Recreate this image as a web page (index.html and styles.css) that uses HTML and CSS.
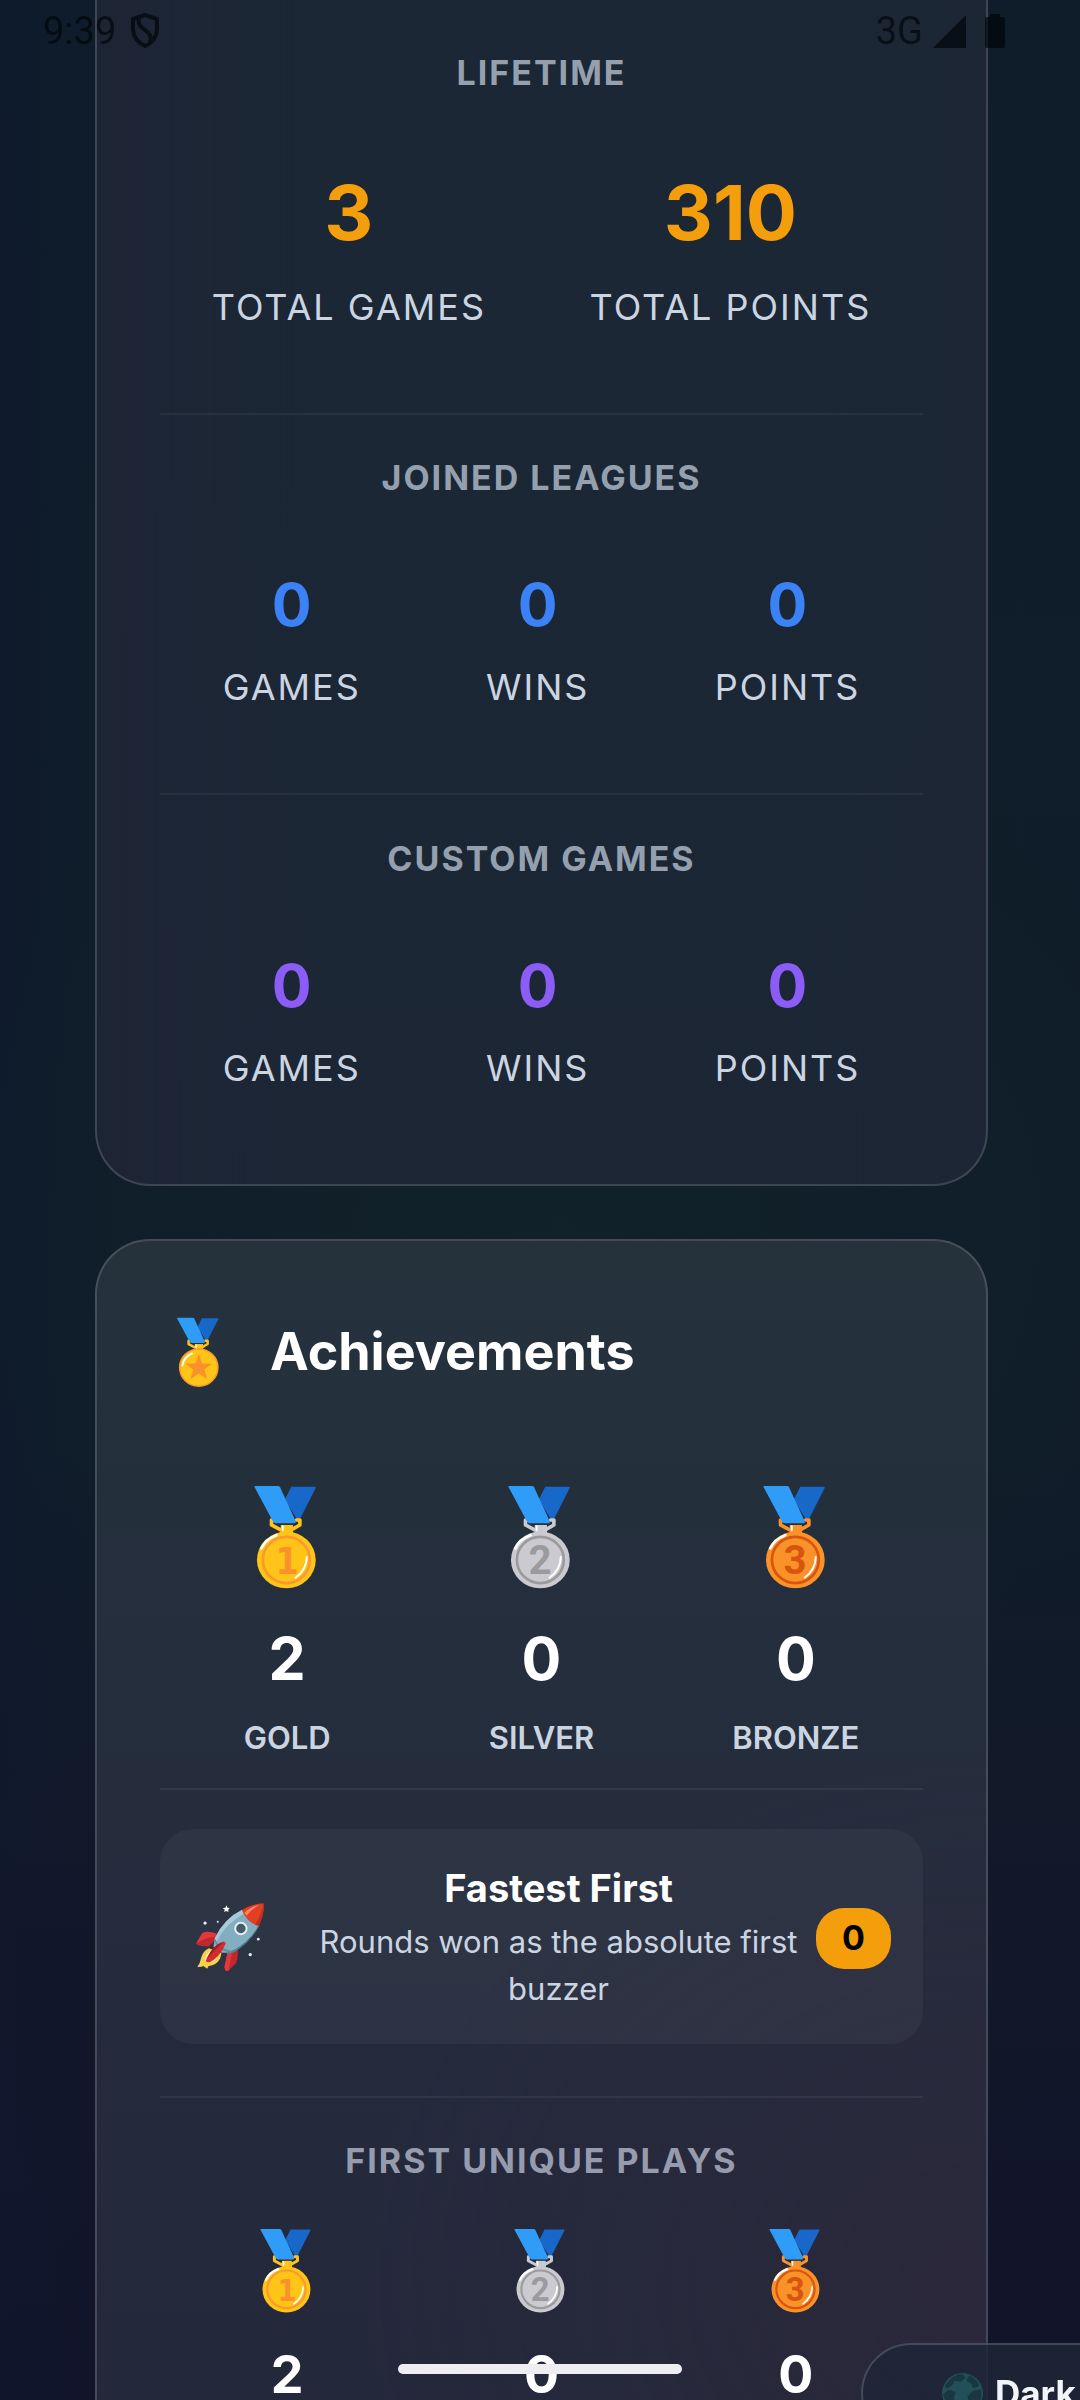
FILE: index.html
```html
<!DOCTYPE html>
<html lang="en">
<head>
<meta charset="utf-8">
<meta name="viewport" content="width=device-width, initial-scale=1">
<title>Player profile</title>
<link rel="stylesheet" href="styles.css">
</head>
<body>
<svg class="defs" aria-hidden="true">
  <defs>
    <g id="ribbon">
      <path d="M112 2H184Q187 3 186 6L134 108L92 42Z" fill="#1768c8"/>
      <path d="M57 103H52V118L80 133H112L138 118V103H128" fill="none" stroke="currentColor" stroke-width="11" stroke-linejoin="round" stroke-linecap="round"/>
      <path d="M80 118H117V145H80Z" fill="currentColor"/>
      <path d="M86 122V134" stroke="#fff" stroke-width="6" stroke-linecap="round"/>
      <path d="M2 0H72Q76 0 78 4L125 106Q128 113 121 113H66Q60 113 57 108L1 4Q-1 0 2 0Z" fill="#2f9df7"/>
    </g>
    <g id="shine" fill="none" stroke="#fff" stroke-linecap="round">
      <path d="M21 189Q34 161 67 149" stroke-width="8"/>
      <path d="M159 215Q158 254 125 278" stroke-width="6"/>
    </g>
    <symbol id="medal-gold" viewBox="0 0 198 312">
      <g color="#fec417"><use href="#ribbon"/></g>
      <ellipse cx="97" cy="224" rx="89" ry="86" fill="#fec417"/>
      <ellipse cx="97" cy="224" rx="71" ry="70" fill="none" stroke="#fb9a2c" stroke-width="8"/>
      <text class="medal-digit slab" x="99" y="267" fill="#fb912c">1</text>
      <use href="#shine"/>
    </symbol>
    <symbol id="medal-silver" viewBox="0 0 198 312">
      <g color="#cbcad0"><use href="#ribbon"/></g>
      <ellipse cx="97" cy="224" rx="89" ry="86" fill="#cbcad0"/>
      <ellipse cx="97" cy="224" rx="71" ry="70" fill="none" stroke="#9b9b9e" stroke-width="8"/>
      <text class="medal-digit" x="96" y="268" fill="#9b9b9e">2</text>
      <use href="#shine"/>
    </symbol>
    <symbol id="medal-bronze" viewBox="0 0 198 312">
      <g color="#f99228"><use href="#ribbon"/></g>
      <ellipse cx="97" cy="224" rx="89" ry="86" fill="#f99228"/>
      <ellipse cx="97" cy="224" rx="71" ry="70" fill="none" stroke="#d8540f" stroke-width="8"/>
      <text class="medal-digit" x="96" y="268" fill="#d8540f">3</text>
      <use href="#shine"/>
    </symbol>
  </defs>
</svg>

<header class="status">
  <span class="status-group">9:39
    <svg class="shield" viewBox="0 0 30 36" aria-hidden="true"><path d="M15 2L27 6V17Q26 28 15 33Q4 28 3 17V6ZM9 5Q7 12 15 17Q23 23 20 29" fill="none" stroke="currentColor" stroke-width="4" stroke-linejoin="round"/></svg>
  </span>
  <span class="status-group right">3G
    <svg class="signal" viewBox="0 0 33 33" aria-hidden="true"><path d="M0 33L33 0V33Z" fill="currentColor"/></svg>
    <svg class="battery" viewBox="0 0 20 34" aria-hidden="true"><path d="M5 3V0H15V3H18Q20 3 20 5V32Q20 34 18 34H2Q0 34 0 32V5Q0 3 2 3Z" fill="currentColor"/></svg>
  </span>
</header>

<main class="page">
  <section class="card stats">
    <section class="block lifetime">
      <h3 class="label">Lifetime</h3>
      <div class="row">
        <div class="stat"><strong>3</strong><span>Total games</span></div>
        <div class="stat"><strong>310</strong><span>Total points</span></div>
      </div>
    </section>
    <section class="block leagues">
      <h3 class="label">Joined leagues</h3>
      <div class="row">
        <div class="stat"><strong>0</strong><span>Games</span></div>
        <div class="stat"><strong>0</strong><span>Wins</span></div>
        <div class="stat"><strong>0</strong><span>Points</span></div>
      </div>
    </section>
    <section class="block custom">
      <h3 class="label">Custom games</h3>
      <div class="row">
        <div class="stat"><strong>0</strong><span>Games</span></div>
        <div class="stat"><strong>0</strong><span>Wins</span></div>
        <div class="stat"><strong>0</strong><span>Points</span></div>
      </div>
    </section>
  </section>

  <section class="card achievements">
    <div class="card-head">
      <svg class="badge-icon" viewBox="0 0 189 312" aria-hidden="true">
        <g color="#fec417"><use href="#ribbon"/></g>
        <ellipse cx="98" cy="224" rx="86" ry="84" fill="#fec417" stroke="#fb9a2c" stroke-width="7"/>
        <path d="M98 163L113 206L158 207L123 233L135 276L98 251L61 276L73 233L38 207L83 206Z" fill="#fb912c"/>
        <path d="M24 215Q30 177 68 160" fill="none" stroke="#fff" stroke-width="8" stroke-linecap="round"/>
      </svg>
      <h2>Achievements</h2>
    </div>
    <div class="medals">
      <div class="medal"><svg aria-hidden="true"><use href="#medal-gold"/></svg><strong>2</strong><span>Gold</span></div>
      <div class="medal"><svg aria-hidden="true"><use href="#medal-silver"/></svg><strong>0</strong><span>Silver</span></div>
      <div class="medal"><svg aria-hidden="true"><use href="#medal-bronze"/></svg><strong>0</strong><span>Bronze</span></div>
    </div>
    <div class="feature-wrap">
      <article class="feature">
        <svg class="rocket" viewBox="0 0 206 209" aria-hidden="true">
          <path d="M61 91Q28 80 18 91L0 122Q3 129 38 130L59 110Z" fill="#c1272d"/>
          <path d="M61 91Q28 80 18 91L0 122Q24 104 58 101Z" fill="#e0383c"/>
          <path d="M94 148L85 190Q87 207 97 202L119 180Q128 160 124 134Z" fill="#c1272d"/>
          <path d="M94 148L85 190Q87 207 97 202Q102 178 108 145Z" fill="#e0383c"/>
          <path d="M39 135Q21 142 15 165Q12 182 4 191Q17 192 22 188L33 196L38 188Q61 187 72 166L76 150Z" fill="#f8d04c"/>
          <path d="M43 143Q29 152 26 172L46 176Q60 171 65 158Z" fill="#fff7cd"/>
          <path d="M138 20Q84 46 56 105L52 130L68 146Q96 152 108 144Q161 116 187 68Z" fill="#82aebf"/>
          <path d="M138 20Q84 46 56 105L61 117Q82 67 148 29Z" fill="#a5cbd8"/>
          <path d="M187 68Q159 126 90 150Q108 153 124 140Q166 113 191 65Z" fill="#4f879b"/>
          <path d="M56 110Q67 139 105 146" fill="none" stroke="#5d8c9c" stroke-width="5"/>
          <path d="M137 22Q165 2 201 1Q207 27 187 68Q153 60 137 22Z" fill="#df3f24"/>
          <path d="M145 29Q165 9 190 6Q165 18 151 38Z" fill="#ff8264"/>
          <path d="M201 1Q207 27 187 68L176 65Q198 32 201 1Z" fill="#c42c1c"/>
          <circle cx="134" cy="76" r="17" fill="#485a66" stroke="#e6eced" stroke-width="6"/>
          <path d="M84 115Q59 122 43 146Q27 170 30 174Q39 185 65 159Q81 142 89 120Z" fill="#d32c2f"/>
          <path d="M84 115Q59 122 43 146L33 166Q64 132 84 115Z" fill="#a51b23"/>
          <path d="M91 7L94 14L101 15L96 20L97 27L91 24L84 27L86 20L80 15L88 14Z" fill="#fff"/>
          <g fill="#e8eef4"><circle cx="27" cy="60" r="5"/><circle cx="65" cy="56" r="3"/><circle cx="186" cy="108" r="4"/><circle cx="162" cy="154" r="5"/></g>
        </svg>
        <div class="feature-text">
          <h4>Fastest First</h4>
          <p>Rounds won as the absolute first buzzer</p>
        </div>
        <span class="pill">0</span>
      </article>
    </div>
    <section class="block plays">
      <h3 class="label">First unique plays</h3>
      <div class="medals small">
        <div class="medal"><svg aria-hidden="true"><use href="#medal-gold"/></svg><strong>2</strong></div>
        <div class="medal"><svg aria-hidden="true"><use href="#medal-silver"/></svg><strong>0</strong></div>
        <div class="medal"><svg aria-hidden="true"><use href="#medal-bronze"/></svg><strong>0</strong></div>
      </div>
    </section>
  </section>
</main>

<div class="home-bar"></div>
<button class="theme" type="button">
  <svg class="globe" viewBox="0 0 42 42" aria-hidden="true"><circle cx="21" cy="21" r="21" fill="#215058"/><path d="M9 6Q14 1 21 1L24 5L19 9L13 8L10 13L5 16L3 13ZM28 2Q36 6 38 13L32 16L30 11L25 8ZM7 17L14 20L12 26L17 31L15 38Q4 33 1 22ZM32 18L40 17Q42 27 35 35L28 32L26 24Z" fill="#193740"/></svg>
  Dark
</button>
</body>
</html>
```
FILE: styles.css
```css
* { box-sizing: border-box; }

html, body { height: 100%; }

body {
  margin: 0;
  overflow: hidden;
  color: #fff;
  font-family: Inter, "Noto Sans", sans-serif;
  background:
    radial-gradient(ellipse 60% 22% at 52% 51%, rgba(18, 38, 42, .5), transparent),
    linear-gradient(90deg, rgba(14, 24, 48, .4), transparent 12%),
    linear-gradient(180deg, #0f1d2a 0%, #101d29 60%, #121729 82%, #12142a 100%);
}

h2, h3, h4, p { margin: 0; }

.defs { position: absolute; width: 0; height: 0; }

.medal-digit {
  font: 700 122px Roboto, sans-serif;
  text-anchor: middle;
}

.medal-digit.slab { font: 700 112px "DejaVu Sans Condensed", "DejaVu Sans", sans-serif; }

/* System overlays */
.status {
  position: fixed;
  inset: 0 0 auto;
  z-index: 2;
  display: flex;
  justify-content: space-between;
  padding: 10px 75px 0 43px;
  color: rgba(0, 5, 8, .68);
  font: 400 38px/42px Roboto, sans-serif;
}

.status-group { display: flex; align-items: center; gap: 14px; }
.status-group.right { gap: 10px; }
.shield { width: 30px; height: 36px; }
.signal { width: 33px; height: 33px; }
.battery { width: 20px; height: 34px; margin-left: 9px; }

.home-bar {
  position: fixed;
  bottom: 26px;
  left: 50%;
  width: 284px;
  height: 10px;
  border-radius: 5px;
  background: #eeedf2;
  transform: translateX(-50%);
}

.page {
  display: flex;
  flex-direction: column;
  gap: 53px;
  min-height: 100%;
  padding: 0 92px 0 95px;
}

.card {
  padding: 0 63px;
  border: 2px solid rgba(255, 255, 255, .15);
}

.stats {
  padding-top: 51px;
  padding-bottom: 10px;
  border-top: 0;
  border-radius: 0 0 55px 55px;
  background:
    linear-gradient(90deg, #1d2535, transparent 25%, transparent 80%, #1c2635),
    linear-gradient(180deg, #1b2735 40%, #1c2635);
}

.achievements {
  flex: 1;
  padding-top: 79px;
  border-bottom: 0;
  border-radius: 55px 55px 0 0;
  background:
    radial-gradient(ellipse 70% 45% at 100% 90%, rgba(50, 40, 58, .5), transparent),
    linear-gradient(180deg, #25323c 0, #242f3c 20%, #252d3d 50%, #24293c 80%, #24283b 100%);
}

.block + .block, .feature-wrap, .plays { border-top: 2px solid rgba(255, 255, 255, .06); }
.block + .block, .plays { padding-top: 41px; }
.block.custom { padding-top: 42px; }

.label {
  color: #95a0ae;
  font-size: 34px;
  font-weight: 700;
  line-height: 44px;
  letter-spacing: 2px;
  text-align: center;
  text-transform: uppercase;
}

.row {
  display: flex;
  justify-content: space-around;
  padding: 69px 0 84px;
}

.stat {
  display: flex;
  flex-direction: column;
  align-items: center;
  gap: 24px;
}

.stat strong { font-size: 59px; line-height: 72px; }

.stat span {
  color: #cbd5e1;
  font-size: 36px;
  line-height: 44px;
  letter-spacing: 2px;
  text-transform: uppercase;
}

.lifetime .row { padding-top: 72px; }
.lifetime .stat { gap: 28px; }
.lifetime strong { color: #f59e0b; font-size: 76px; line-height: 90px; }
.leagues strong { color: #3b82f6; }
.custom strong { color: #8b5cf6; }

.card-head {
  display: flex;
  align-items: center;
  gap: 51px;
  height: 64px;
  padding-left: 17px;
}

.card-head h2 { font-size: 52px; line-height: 64px; }
.badge-icon { width: 42px; height: 71px; overflow: visible; }

.medals {
  display: grid;
  grid-template-columns: repeat(3, 1fr);
  padding: 102px 0 30px;
}

.medal {
  display: flex;
  flex-direction: column;
  align-items: center;
}

.medal svg { width: 66px; height: 103px; }

.medal strong {
  margin-top: 34px;
  font-size: 59px;
  line-height: 72px;
}

.medal span {
  margin-top: 23px;
  color: #cbd5e1;
  font-size: 31px;
  font-weight: 600;
  line-height: 40px;
  text-transform: uppercase;
}

.medals.small { padding: 46px 0 0; }
.small .medal svg { width: 54px; height: 84px; }
.small .medal strong { margin-top: 30px; font-size: 52px; line-height: 64px; }

.feature-wrap { padding: 39px 0 52px; }

.feature {
  display: flex;
  align-items: center;
  padding: 35px 32px 32px 36px;
  border-radius: 33px;
  background: rgba(255, 255, 255, .04);
}

.rocket { flex: none; width: 69px; height: 70px; margin-right: 36px; }
.feature-text { flex: 1; text-align: center; }
.feature-text h4 { margin-bottom: 6px; font-size: 38px; line-height: 48px; }
.feature-text p { color: #cbd5e1; font-size: 31px; line-height: 47px; }

.pill {
  min-width: 75px;
  padding: 8px 0 9px;
  border-radius: 28px;
  color: #000;
  background: #f59e0b;
  font-size: 34px;
  font-weight: 700;
  line-height: 44px;
  text-align: center;
}

.plays .label { color: #969bae; }

.theme {
  position: fixed;
  right: -60px;
  bottom: -43px;
  display: flex;
  align-items: center;
  gap: 12px;
  width: 279px;
  height: 100px;
  padding: 0 0 0 79px;
  border: 2px solid rgba(255, 255, 255, .17);
  border-radius: 50px;
  color: #f1f5f9;
  background: rgba(30, 37, 55, .88);
  font: 700 35px Inter, sans-serif;
}

.globe { width: 41px; height: 41px; }
```
